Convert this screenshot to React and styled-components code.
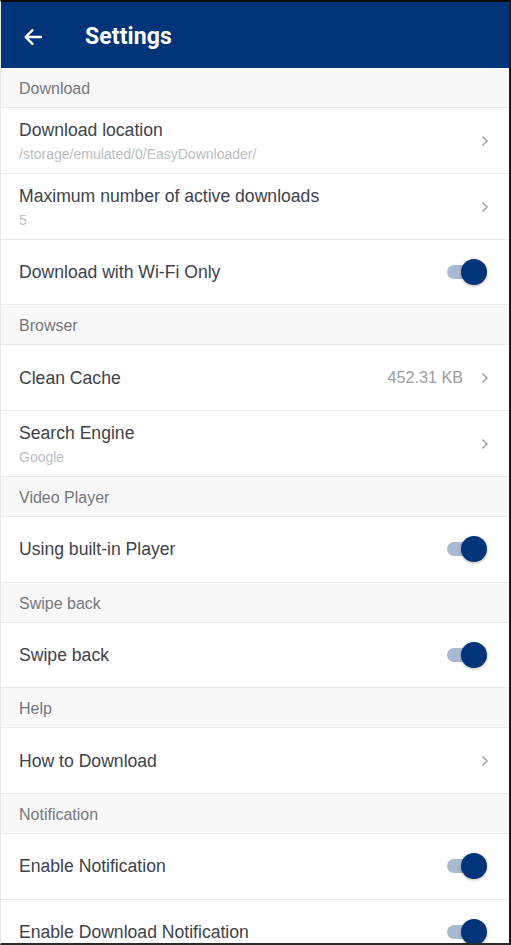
import React from "react";
import styled, { createGlobalStyle } from "styled-components";

const GlobalStyle = createGlobalStyle`
  html, body {
    margin: 0;
    padding: 0;
    background: #ffffff;
    font-family: "Liberation Sans", Arial, sans-serif;
  }
`;

const settings = [
  {
    section: "Download",
    items: [
      { title: "Download location", sub: "/storage/emulated/0/EasyDownloader/", type: "link" },
      { title: "Maximum number of active downloads", sub: "5", type: "link" },
      { title: "Download with Wi-Fi Only", type: "toggle" },
    ],
  },
  {
    section: "Browser",
    items: [
      { title: "Clean Cache", value: "452.31 KB", type: "link" },
      { title: "Search Engine", sub: "Google", type: "link" },
    ],
  },
  { section: "Video Player", items: [{ title: "Using built-in Player", type: "toggle" }] },
  { section: "Swipe back", items: [{ title: "Swipe back", type: "toggle" }] },
  { section: "Help", items: [{ title: "How to Download", type: "link" }] },
  {
    section: "Notification",
    items: [
      { title: "Enable Notification", type: "toggle" },
      { title: "Enable Download Notification", type: "toggle" },
    ],
  },
];

const App = () => {
  return (
    <>
      <GlobalStyle />
      <Frame>
        <Header>
          <BackButton aria-label="back">
            <svg width="20" height="20" viewBox="0 0 20 20" fill="none">
              <path
                d="M18 10H3M9.5 3.2L2.6 10l6.9 6.8"
                stroke="#fff"
                strokeWidth="2.4"
                strokeLinecap="round"
                strokeLinejoin="round"
              />
            </svg>
          </BackButton>
          <Title>Settings</Title>
        </Header>
        <List>
          {settings.map((group) => (
            <React.Fragment key={group.section}>
              <SectionHeader>{group.section}</SectionHeader>
              {group.items.map((item) => (
                <Row key={item.title} $twoLine={!!item.sub}>
                  <Texts>
                    <RowTitle>{item.title}</RowTitle>
                    {item.sub && <RowSub>{item.sub}</RowSub>}
                  </Texts>
                  {item.value && <RowValue>{item.value}</RowValue>}
                  {item.type === "link" ? (
                    <Chevron viewBox="0 0 6 10">
                      <path
                        d="M1 1l4 4-4 4"
                        stroke="#9ba1ab"
                        strokeWidth="1.6"
                        fill="none"
                        strokeLinecap="round"
                        strokeLinejoin="round"
                      />
                    </Chevron>
                  ) : (
                    <Toggle>
                      <Track />
                      <Thumb />
                    </Toggle>
                  )}
                </Row>
              ))}
            </React.Fragment>
          ))}
        </List>
      </Frame>
    </>
  );
};

export default App;

const Frame = styled.div`
  box-sizing: border-box;
  width: 511px;
  height: 945px;
  overflow: hidden;
  border-top: 2px solid #0c0c0c;
  border-right: 2px solid #1b1b1b;
  border-bottom: 2px solid #2a2a2a;
  border-left: 1px solid #e6e6e6;
  display: flex;
  flex-direction: column;
  background: #ffffff;
`;

const Header = styled.div`
  box-sizing: border-box;
  flex: 0 0 66px;
  background: #013479;
  display: flex;
  align-items: center;
  padding: 3px 0 0 22px;
  gap: 42px;
`;

const BackButton = styled.div`
  display: flex;
  align-items: center;
  width: 20px;
  height: 20px;
`;

const Title = styled.h1`
  margin: 0;
  color: #ffffff;
  font-size: 23px;
  font-weight: 700;
  font-family: "Roboto", "Liberation Sans", sans-serif;
  letter-spacing: 0.1px;
`;

const List = styled.div`
  display: flex;
  flex-direction: column;
`;

const SectionHeader = styled.div`
  box-sizing: border-box;
  height: 40px;
  background: #f8f8f8;
  border-bottom: 1px solid #e9e9e9;
  display: flex;
  align-items: center;
  padding: 3px 0 0 18px;
  color: #74777c;
  font-size: 16px;
`;

const Row = styled.div`
  box-sizing: border-box;
  flex-shrink: 0;
  height: 65.75px;
  border-bottom: 1px solid #e9e9e9;
  display: flex;
  align-items: center;
  padding: ${(p) => (p.$twoLine ? "2px" : "0")} 21px 0 18px;
`;

const Texts = styled.div`
  flex: 1;
  display: flex;
  flex-direction: column;
  gap: 4px;
  min-width: 0;
`;

const RowTitle = styled.div`
  color: #3e4249;
  font-size: 17.6px;
  line-height: 22px;
`;

const RowSub = styled.div`
  color: #babdc2;
  font-size: 14px;
  line-height: 18px;
`;

const RowValue = styled.div`
  color: #979ba2;
  font-size: 16.2px;
  margin-right: 19px;
`;

const Chevron = styled.svg`
  width: 6px;
  height: 10px;
`;

const Toggle = styled.div`
  position: relative;
  width: 40px;
  height: 26px;
  margin-right: 1px;
`;

const Track = styled.div`
  position: absolute;
  left: 0;
  top: 6px;
  width: 34px;
  height: 14px;
  border-radius: 7px;
  background: #a9b9d0;
`;

const Thumb = styled.div`
  position: absolute;
  right: 0;
  top: 0;
  width: 26px;
  height: 26px;
  border-radius: 50%;
  background: #023479;
  box-shadow: 0 1px 3px rgba(0, 0, 0, 0.3);
`;
